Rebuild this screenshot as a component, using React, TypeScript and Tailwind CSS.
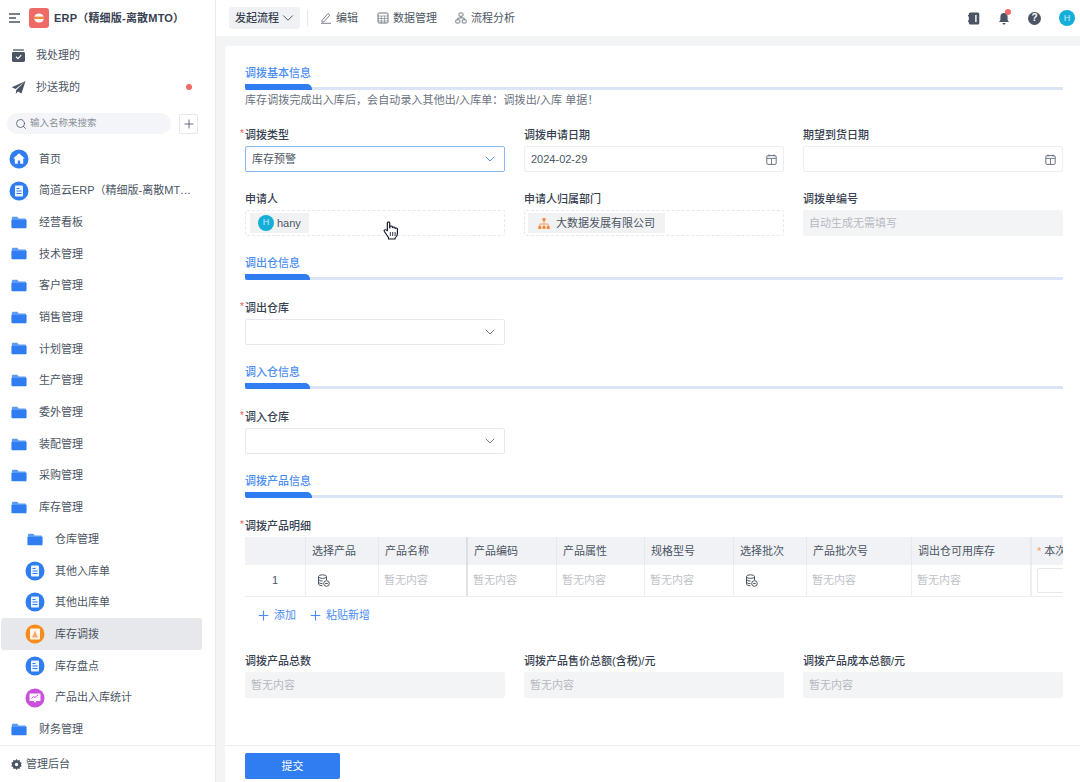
import React from "react";
import { ChevronDown, Plus, Search } from "lucide-react";

const Folder = () => (
  <svg width="16" height="13" viewBox="0 0 19 16" preserveAspectRatio="none" className="shrink-0">
    <path d="M1 4V2.600C1 1.700 1.700 1 2.600 1h4.200c.5 0 .9.2 1.200.6L9 3h7.400c.9 0 1.600.7 1.600 1.600V5H1z" fill="#5b9bf5" />
    <path d="M.5 5h18v8.400c0 .9-.7 1.600-1.600 1.600H2.100c-.9 0-1.600-.7-1.600-1.600V5z" fill="#2f7df0" />
  </svg>
);

const Doc = ({ color = "#2f7df0" }: { color?: string }) => (
  <svg width="20" height="20" viewBox="0 0 20 20" className="shrink-0">
    <circle cx="10" cy="10" r="9.500" fill={color} />
    <path d="M6 5.200c0-.4.3-.7.7-.7h6.600c.4 0 .7.3.7.7v9.600c0 .4-.3.7-.7.7H6.700c-.4 0-.7-.3-.7-.7V5.200z" fill="#fff" fillOpacity=".92" />
    <path d="M7.500 7.500h3M7.500 10h5M7.500 12.500h5" stroke={color} strokeWidth="1" />
  </svg>
);

const Orange = () => (
  <svg width="20" height="20" viewBox="0 0 20 20" className="shrink-0">
    <circle cx="10" cy="10" r="9.500" fill="#f98a1c" />
    <rect x="5" y="4.500" width="10" height="11" rx="1" fill="#fff" fillOpacity=".92" />
    <path d="M10 6.500l1.300 3.200 1.700 3.800H7l1.700-3.800z" fill="#f7a86a" />
  </svg>
);

const Purple = () => (
  <svg width="20" height="20" viewBox="0 0 20 20" className="shrink-0">
    <circle cx="10" cy="10" r="9.500" fill="#c94fdc" />
    <path d="M4.500 5.500h11v7.500h-4l-1.500 2-1.500-2h-4z" fill="#fff" fillOpacity=".95" />
    <path d="M6.500 10.500l2-2 1.500 1 3-2.500" stroke="#c94fdc" strokeWidth="1" fill="none" />
  </svg>
);

const Home = () => (
  <svg width="20" height="20" viewBox="0 0 20 20" className="shrink-0">
    <circle cx="10" cy="10" r="9.500" fill="#2f7df0" />
    <path d="M10 4.200L4.200 9.600h1.600v5.200h3v-3.300h2.400v3.300h3V9.600h1.600z" fill="#fff" />
  </svg>
);

type Row = { label: string; icon: React.ReactNode; nested?: boolean; active?: boolean };

const rows: Row[] = [
  { label: "首页", icon: <Home /> },
  { label: "简道云ERP（精细版-离散MTO）", icon: <Doc /> },
  { label: "经营看板", icon: <Folder /> },
  { label: "技术管理", icon: <Folder /> },
  { label: "客户管理", icon: <Folder /> },
  { label: "销售管理", icon: <Folder /> },
  { label: "计划管理", icon: <Folder /> },
  { label: "生产管理", icon: <Folder /> },
  { label: "委外管理", icon: <Folder /> },
  { label: "装配管理", icon: <Folder /> },
  { label: "采购管理", icon: <Folder /> },
  { label: "库存管理", icon: <Folder /> },
  { label: "仓库管理", icon: <Folder />, nested: true },
  { label: "其他入库单", icon: <Doc />, nested: true },
  { label: "其他出库单", icon: <Doc />, nested: true },
  { label: "库存调拨", icon: <Orange />, nested: true, active: true },
  { label: "库存盘点", icon: <Doc />, nested: true },
  { label: "产品出入库统计", icon: <Purple />, nested: true },
  { label: "财务管理", icon: <Folder /> },
];

const Sidebar = () => (
  <aside className="w-[216px] shrink-0 h-full flex flex-col bg-white border-r border-[#e9ebef]">
    <div className="h-[36px] flex items-center pl-[9px] shrink-0">
      <svg width="12" height="10" viewBox="0 0 12 10" className="shrink-0">
        <path d="M0 1h11M0 5h7M0 9h11" stroke="#4b5563" strokeWidth="1.400" />
      </svg>
      <div className="ml-[8px] w-[20px] h-[20px] rounded-[3px] bg-[#ee6a66] flex items-center justify-center">
        <svg width="12" height="10" viewBox="0 0 12 10">
          <ellipse cx="6" cy="5" rx="5" ry="4.500" fill="#fff" />
          <rect x="1" y="3.600" width="10" height="2.400" fill="#ef8a3c" />
        </svg>
      </div>
      <span className="ml-[5px] text-[11px] font-semibold tracking-[0.2px] text-[#374151] whitespace-nowrap">ERP（精细版-离散MTO）</span>
    </div>
    <div className="h-[32px] flex items-center pl-[11px] mt-[3px] shrink-0">
      <svg width="15" height="15" viewBox="0 0 15 15">
        <rect x="2" y="1" width="11" height="2" rx=".6" fill="#8b919b" />
        <rect x="1" y="4" width="13" height="10" rx="1.400" fill="#4b5563" />
        <path d="M5 8.800l2 1.800 3.200-3.400" stroke="#fff" strokeWidth="1.200" fill="none" />
      </svg>
      <span className="ml-[10px] text-[11px] text-[#4b5563]">我处理的</span>
    </div>
    <div className="h-[32px] flex items-center pl-[11px] shrink-0 pr-[23px]">
      <svg width="15" height="15" viewBox="0 0 15 15">
        <path d="M14.500 1L.8 7.200l3.700 1.900L14.500 1zM5.200 10l-.4 4 2.200-2.400 3.500 1.900L14.500 1z" fill="#4b5563" />
      </svg>
      <span className="ml-[10px] text-[11px] text-[#4b5563]">抄送我的</span>
      <span className="ml-auto w-[6px] h-[6px] rounded-full bg-[#ee6a66]" />
    </div>
    <div className="flex items-center pl-[7px] mt-[10px] shrink-0">
      <div className="w-[164px] h-[21px] rounded-full bg-[#f3f5f8] flex items-center pl-[8px]">
        <Search size={12} strokeWidth={1.6} className="text-[#4b5563]" />
        <span className="ml-[3px] text-[9.5px] text-[#8b919b]">输入名称来搜索</span>
      </div>
      <div className="ml-[8px] w-[19px] h-[20px] rounded-[2px] border border-[#e5e7eb] flex items-center justify-center">
        <Plus size={14} strokeWidth={1.4} className="text-[#4b5563]" />
      </div>
    </div>
    <div className="flex-1 overflow-hidden mt-[9px]">
      {rows.map((r) => (
        <div
          key={r.label}
          className={`h-[31.7px] flex items-center pr-[10px] ${r.nested ? "pl-[25px]" : "pl-[9px]"} ${r.active ? "bg-[#e7e8eb] rounded-[3px] ml-[1px] mr-[13px] !pl-[24px]" : "mr-[13px]"}`}
        >
          <span className="w-[20px] flex justify-center shrink-0">{r.icon}</span>
          <span className="ml-[10px] text-[11px] text-[#4b5563] truncate">{r.label}</span>
        </div>
      ))}
    </div>
    <div className="h-[37px] shrink-0 border-t border-[#eceef1] flex items-center pl-[11px]">
      <svg width="11" height="11" viewBox="0 0 12 12">
        <path d="M6 0l1.300 1.600 2-.4.5 2 1.900.9-.9 1.900.9 1.900-1.900.9-.5 2-2-.4L6 12l-1.300-1.600-2 .4-.5-2-1.900-.9.9-1.900-.9-1.900 1.900-.9.5-2 2 .4z" fill="#4b5563" />
        <circle cx="6" cy="6" r="1.800" fill="#fff" />
      </svg>
      <span className="ml-[4px] text-[11px] text-[#4b5563]">管理后台</span>
    </div>
  </aside>
);

const TopBar = () => (
  <header className="h-[36px] shrink-0 bg-white flex items-center pl-[13px] pr-[5px]">
    <div className="w-[71px] h-[22px] rounded-[3px] bg-[#eff1f4] flex items-center pl-[6px]">
      <span className="text-[11px] font-medium text-[#374151]">发起流程</span>
      <ChevronDown size={18} strokeWidth={1.3} className="text-[#4b5563]" />
    </div>
    <div className="ml-[7px] w-px h-[16px] bg-[#e5e7eb]" />
    <div className="ml-[12px] flex items-center">
      <svg width="12" height="12" viewBox="0 0 12 12">
        <path d="M2 8.400L8 1.500l1.800 1.600L3.800 10H2zM1 11.300h10" stroke="#6b7280" fill="none" strokeWidth=".9" />
      </svg>
      <span className="ml-[4px] text-[11px] text-[#4b5563]">编辑</span>
    </div>
    <div className="ml-[19px] flex items-center">
      <svg width="12" height="12" viewBox="0 0 12 12">
        <rect x="1" y="1" width="10" height="10" rx="1.200" stroke="#6b7280" fill="none" />
        <path d="M1 4h10M1 6.500h10M1 9h10M4.300 4v7M7.600 4v7" stroke="#6b7280" strokeWidth=".6" />
      </svg>
      <span className="ml-[4px] text-[11px] text-[#4b5563]">数据管理</span>
    </div>
    <div className="ml-[18px] flex items-center">
      <svg width="12" height="12" viewBox="0 0 12 12">
        <rect x="4" y="1" width="4" height="3.200" rx=".6" stroke="#6b7280" fill="none" strokeWidth=".9" />
        <rect x=".8" y="7.800" width="4" height="3.200" rx=".6" stroke="#6b7280" fill="none" strokeWidth=".9" />
        <rect x="7.200" y="7.800" width="4" height="3.200" rx=".6" stroke="#6b7280" fill="none" strokeWidth=".9" />
        <path d="M6 4.200V6M2.800 7.800V6h6.400v1.800" stroke="#6b7280" fill="none" strokeWidth=".9" />
      </svg>
      <span className="ml-[4px] text-[11px] text-[#4b5563]">流程分析</span>
    </div>
    <div className="ml-auto flex items-center">
      <svg width="12" height="13" viewBox="0 0 12 13">
        <rect x=".8" y=".5" width="10.500" height="12" rx="1.500" fill="#4b5563" />
        <rect x="7.200" y="3" width="1.400" height="7" fill="#fff" />
        <rect y="3" width="1.600" height="1.400" fill="#4b5563" />
        <rect y="8.500" width="1.600" height="1.400" fill="#4b5563" />
      </svg>
      <div className="relative ml-[18px] w-[12px] h-[13px]">
        <svg width="12" height="13" viewBox="0 0 12 13">
          <path d="M6 1c2.300 0 3.600 1.700 3.600 3.800V8l1.400 2H1l1.400-2V4.800C2.400 2.700 3.700 1 6 1zM4.500 11h3c0 1-.7 1.600-1.500 1.600S4.500 12 4.500 11z" fill="#4b5563" />
        </svg>
        <span className="absolute -top-[3px] -right-[1px] w-[6px] h-[6px] rounded-full bg-[#ee6a66]" />
      </div>
      <div className="ml-[18px] w-[13px] h-[13px] rounded-full bg-[#4b5563] flex items-center justify-center text-white text-[10px] font-bold leading-none">?</div>
      <div className="ml-[18px] w-[16px] h-[16px] rounded-full bg-[#13afd8] flex items-center justify-center text-[#cfe6ff] text-[9px] leading-none">H</div>
    </div>
  </header>
);

const SectionTitle = ({ title, w }: { title: string; w: string }) => (
  <div>
    <div className="h-[16px] leading-[18px] text-[11px] font-medium text-[#4a8df2]">{title}</div>
    <div className="mt-[4px] h-[6px] w-[818px] relative">
      <div className="absolute left-0 right-0 bottom-0 h-[3px] bg-[#dbe5f7]" />
      <div className={`absolute left-0 top-0 h-[6px] bg-[#2f7df0] rounded-tr-[5px] rounded-bl-[2px] ${w}`} />
    </div>
  </div>
);

const Label = ({ text, required }: { text: string; required?: boolean }) => (
  <div className="relative h-[16px] leading-[18px] text-[11px] font-medium text-[#374151] whitespace-nowrap">
    {required && <span className="absolute -left-[5px] -top-[1px] text-[#ee5b55] text-[10px]">*</span>}
    {text}
  </div>
);

const box = "mt-[4px] h-[26px] rounded-[2px] flex items-center";

const Cal = () => (
  <svg width="11" height="11" viewBox="0 0 11 11" className="ml-auto mr-[6px] shrink-0">
    <rect x=".8" y="1.600" width="9.400" height="8.800" rx="1.300" stroke="#6b7280" fill="none" />
    <path d="M.8 4.400h9.400M5.500 4.400v6M3 .4v2.200M8 .4v2.200" stroke="#6b7280" strokeWidth=".9" />
  </svg>
);

const SelectBox = ({ value, focused }: { value?: string; focused?: boolean }) => (
  <div className={`${box} w-[260px] border px-[6px] ${focused ? "border-[#8db6f5]" : "border-[#e6e8ec]"}`}>
    <span className="text-[11px] text-[#4b5563]">{value}</span>
    <ChevronDown size={16} strokeWidth={1.4} className={`ml-auto ${focused ? "text-[#4a8df2]" : "text-[#6b7280]"}`} />
  </div>
);

const DateBox = ({ value }: { value?: string }) => (
  <div className={`${box} border border-[#eceef2] pl-[6px]`}>
    <span className="text-[11px] text-[#4b5563]">{value}</span>
    <Cal />
  </div>
);

const Muted = ({ text }: { text: string }) => (
  <div className={`${box} bg-[#f3f4f6] pl-[6px] text-[11px] text-[#b6bac1]`}>{text}</div>
);

const Disk = () => (
  <svg width="13" height="13" viewBox="0 0 13 13">
    <ellipse cx="5.500" cy="2.600" rx="4" ry="1.800" stroke="#4b5563" fill="none" />
    <path d="M1.500 2.600v7.400c0 1 1.800 1.800 4 1.800M9.500 2.600v3.400M1.500 5.200c0 1 1.800 1.800 4 1.800M1.500 7.800c0 1 1.800 1.800 4 1.800" stroke="#4b5563" fill="none" />
    <circle cx="9.500" cy="9.500" r="2.800" fill="#fff" stroke="#4b5563" />
    <path d="M8.200 9.500h2.600" stroke="#4b5563" />
  </svg>
);

const heads = ["", "选择产品", "产品名称", "产品编码", "产品属性", "规格型号", "选择批次", "产品批次号", "调出仓可用库存"];

const headBorder = (i: number) =>
  i === 2 ? "border-r-2 border-[#dcdee3]" : i === 8 ? "border-r-2 border-[#e6e8ec]" : "border-r border-[#e6e8ec]";
const rowBorder = (i: number) =>
  i === 2 ? "border-r-2 border-[#e0e2e6]" : i === 8 ? "border-r-2 border-[#eceef1]" : "border-r border-[#eceef1]";

const DetailTable = () => (
  <div className="mt-[4px] w-[818px] border-b border-[#eceef1]">
    <div className="grid grid-cols-[61px_73px_89px_89px_88px_89px_73px_105px_120px_31px] h-[28px] bg-[#f1f2f5] text-[11px] text-[#4b5563]">
      {heads.map((h, i) => (
        <div key={i} className={`flex items-center pl-[6px] ${headBorder(i)}`}>{h}</div>
      ))}
      <div className="flex items-center pl-[5px] whitespace-nowrap overflow-hidden"><span className="text-[#f0a060] mr-[3px]">*</span>本次</div>
    </div>
    <div className="grid grid-cols-[61px_73px_89px_89px_88px_89px_73px_105px_120px_31px] h-[31px] text-[11px] text-[#c0c3c9]">
      {heads.map((h, i) => (
        <div key={i} className={`flex items-center ${rowBorder(i)} ${i === 0 ? "justify-center text-[#4b5563]" : i === 1 || i === 6 ? "pl-[11px]" : "pl-[5px]"}`}>
          {i === 0 ? "1" : i === 1 || i === 6 ? <Disk /> : "暂无内容"}
        </div>
      ))}
      <div className="flex items-center pl-[5px] overflow-hidden">
        <div className="w-[40px] h-[25px] shrink-0 border border-[#e6e8ec] rounded-[2px]" />
      </div>
    </div>
  </div>
);

const Hand = () => (
  <svg width="19" height="19" viewBox="0 0 16 19" preserveAspectRatio="none" className="absolute left-[382px] top-[221px]">
    <path d="M4.500 2c0-1.300 2-1.300 2 0v5l.2-1.200c0-1.200 2-1.200 2 0l.2 1c0-1.200 2-1.200 2 0l.2.800c.2-1 1.900-1 1.900.3v4.600c0 2-1 3.500-2 4.500v1H5.500v-1.500L2 10.500c-.8-1.200.7-2.400 1.700-1.500l.8.800z" fill="#fff" stroke="#111827" strokeWidth="1" strokeLinejoin="round" />
    <path d="M7 11v4M9 11v4M11 11v4" stroke="#111827" strokeWidth=".8" />
  </svg>
);

const Form = () => (
  <div className="flex-1 overflow-hidden pl-[20px] pt-[18px]">
    <SectionTitle title="调拨基本信息" w="w-[67px]" />
    <div className="mt-px h-[16px] leading-[18px] text-[11px] tracking-[0.1px] text-[#6b7280] whitespace-nowrap">库存调拨完成出入库后，会自动录入其他出/入库单：调拨出/入库 单据！</div>
    <div className="mt-[19px] grid grid-cols-3 gap-x-[19px] gap-y-[18px] w-[818px]">
      <div><Label text="调拨类型" required /><SelectBox value="库存预警" focused /></div>
      <div><Label text="调拨申请日期" /><DateBox value="2024-02-29" /></div>
      <div><Label text="期望到货日期" /><DateBox /></div>
      <div>
        <Label text="申请人" />
        <div className={`${box} border border-dashed border-[#e6e8ec] pl-[4px]`}>
          <div className="h-[20px] pl-[8px] pr-[8px] bg-[#f1f2f4] flex items-center">
            <span className="w-[16px] h-[16px] rounded-full bg-[#13afd8] text-[#cfe6ff] text-[9px] flex items-center justify-center">H</span>
            <span className="ml-[3px] text-[11px] text-[#4b5563]">hany</span>
          </div>
        </div>
      </div>
      <div>
        <Label text="申请人归属部门" />
        <div className={`${box} border border-dashed border-[#e6e8ec] pl-[3px]`}>
          <div className="h-[20px] pl-[10px] pr-[10px] bg-[#f1f2f4] flex items-center">
            <svg width="12" height="11" viewBox="0 0 12 11">
              <path d="M6 3v3M1.800 8V6h8.400v2M6 6v2" stroke="#f59a52" fill="none" strokeWidth=".9" />
              <rect x="4.500" y="0" width="3" height="3" fill="#f08a3c" />
              <rect x=".3" y="8" width="3" height="3" fill="#f08a3c" />
              <rect x="4.500" y="8" width="3" height="3" fill="#f08a3c" />
              <rect x="8.700" y="8" width="3" height="3" fill="#f08a3c" />
            </svg>
            <span className="ml-[6px] text-[11px] text-[#4b5563]">大数据发展有限公司</span>
          </div>
        </div>
      </div>
      <div><Label text="调拨单编号" /><Muted text="自动生成无需填写" /></div>
    </div>

    <div className="mt-[18px]"><SectionTitle title="调出仓信息" w="w-[65px]" /></div>
    <div className="mt-[19px]"><Label text="调出仓库" required /><SelectBox /></div>

    <div className="mt-[18px]"><SectionTitle title="调入仓信息" w="w-[65px]" /></div>
    <div className="mt-[19px]"><Label text="调入仓库" required /><SelectBox /></div>

    <div className="mt-[18px]"><SectionTitle title="调拨产品信息" w="w-[67px]" /></div>
    <div className="mt-[19px]"><Label text="调拨产品明细" required /><DetailTable /></div>

    <div className="mt-[10px] h-[16px] flex items-center pl-[11px] text-[11px] text-[#4a8df2]">
      <Plus size={15} strokeWidth={1.8} />
      <span className="ml-[3px]">添加</span>
      <Plus size={15} strokeWidth={1.8} className="ml-[12px]" />
      <span className="ml-[3px]">粘贴新增</span>
    </div>

    <div className="mt-[29px] grid grid-cols-3 gap-x-[19px] w-[818px]">
      <div><Label text="调拨产品总数" /><Muted text="暂无内容" /></div>
      <div><Label text="调拨产品售价总额(含税)/元" /><Muted text="暂无内容" /></div>
      <div><Label text="调拨产品成本总额/元" /><Muted text="暂无内容" /></div>
    </div>
  </div>
);

export default function App() {
  return (
    <div className="relative w-[1080px] h-[782px] overflow-hidden flex bg-[#f3f4f6] font-['Liberation_Sans','Noto_Sans_CJK_SC',sans-serif]">
      <Sidebar />
      <main className="flex-1 min-w-0 flex flex-col h-full">
        <TopBar />
        <div className="flex-1 min-h-0 pt-[10px] pl-[9px]">
          <div className="h-full bg-white rounded-tl-[3px] flex flex-col">
            <Form />
            <div className="h-[37px] shrink-0 border-t border-[#eceef1] pl-[20px] pt-[7px]">
              <div className="w-[95px] h-[26px] rounded-[2px] bg-[#2f7df0] text-white text-[11px] flex items-center justify-center">提交</div>
            </div>
          </div>
        </div>
      </main>
      <Hand />
    </div>
  );
}
